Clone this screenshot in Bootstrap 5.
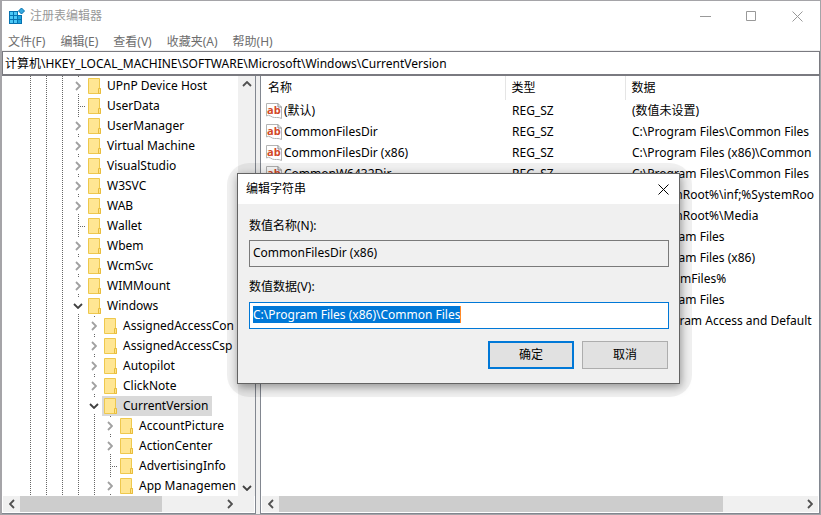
<!DOCTYPE html>
<html lang="zh-CN">
<head>
<meta charset="utf-8">
<meta name="viewport" content="width=device-width, initial-scale=1">
<title>注册表编辑器</title>
<link href="https://cdn.jsdelivr.net/npm/bootstrap@5.3.0/dist/css/bootstrap.min.css" rel="stylesheet">
<style>
body{font-family:"Noto Sans","Noto Sans CJK SC",sans-serif;font-size:12px;line-height:16px;color:#000;background:#a5a4a8;padding:1px 1px 1px 2px}
button,input{font:inherit;color:inherit}
.regwin{background:#fff}
.caption-bar{height:30px;color:#999;padding-left:6px}
.capbtn{width:46px;height:30px;background:none;border:0;padding:0;color:#999}
.menu-bar{height:19px;padding-left:6px;gap:15px}
.menu-bar a{color:#6d6d6d;text-decoration:none;padding-top:2px}
.addr{height:25px;padding:0 2px;border:1px solid #7a7a80;border-bottom-width:2px;margin-top:1px;border-radius:0;background:#fff;box-shadow:0 -1px #f0f0f0;outline:0}
.tree-pane{width:254px;border-right:1px solid #828790;border-bottom:1px solid #828790}
.splitter{width:4px;background:#f0f0f0}
.list-pane{border-left:1px solid #828790;border-right:1px solid #828790;border-bottom:1px solid #828790}
.tree{list-style:none;padding-left:20px}
.tree li{height:20px;white-space:nowrap}
.guide{width:16px;height:20px;flex:none;background:repeating-linear-gradient(#666 0 1px,transparent 1px 2px) 8px 0/1px 100% no-repeat}
.twist{width:16px;height:20px;flex:none;display:flex;align-items:center;justify-content:center;background:linear-gradient(#666,#666) 8px 0/1px 1px no-repeat,linear-gradient(#666,#666) 8px 18px/1px 1px no-repeat}
.leafline{background:repeating-linear-gradient(#666 0 1px,transparent 1px 2px) 8px 0/1px 100% no-repeat,repeating-linear-gradient(90deg,#666 0 1px,transparent 1px 2px) 8px 10px/8px 1px no-repeat}
.nodebox{height:20px;padding:0 4px 0 2px;gap:6px}
.nodebox.picked{background:#d9d9d9}
.sbar{background:#f0f0f0}
.sbar-v{width:17px}
.sbar-h{height:16px;margin:0 1px 1px}
.sarrow{width:17px;height:16px;flex:none;border:0;padding:0;background:none;display:flex;align-items:center;justify-content:center}
.sthumb{background:#cdcdcd}
.thumb-tree{flex:141}.rest-tree{flex:59}
.thumb-list{flex:445}.rest-list{flex:78}
.values{table-layout:fixed;width:100%;border-collapse:collapse}
.values th,.values td{padding:0 0 0 7px;white-space:nowrap;overflow:hidden;font-weight:400;height:21px}
.values th{height:24px}
.values th+th{border-left:1px solid #e5e5e5;padding-left:6px}
.values td:first-child{padding-left:5px}
.namecell{gap:2px}
.col-name{width:244px}.col-type{width:120px}
.edit-dialog{position:absolute;left:237px;top:173px;width:443px;border:1px solid #6a6a6a;background:#f0f0f0;box-shadow:1px 3px 9px rgba(0,0,0,.4);z-index:2}
.edit-dialog::before{content:"";position:absolute;inset:-11px -13px -14px -11px;border-radius:22px;background:rgba(0,0,0,.06);z-index:-1}
.dlg-title{height:30px;background:#fff;padding-left:8px}
.dlg-title button{width:31px;height:30px;border:0;background:none;padding:0}
.dlg-body{background:#f0f0f0;padding:14px 10px 14px 11px}
.dlg-body input{width:100%;height:27px;display:block;border:1px solid #7a7a7a;border-radius:0;padding:0 3px 2px;background:#f0f0f0;outline:0;line-height:17px;margin:6px 0 12px}
.dlg-body input.live{border-color:#0078d7;margin-top:7px;background:linear-gradient(#ff8728,#ff8728) 210px 3px/1px 17px no-repeat #fff}
.dlg-body input.live::selection{background:#0078d7;color:#fff}
.dlg-actions{padding-right:1px}
.dbtn{width:86px;height:28px;border:1px solid #adadad;background:#e1e1e1;padding:0}
.dbtn.main{border:2px solid #0078d7}
</style>
<script src="https://cdn.jsdelivr.net/npm/bootstrap@5.3.0/dist/js/bootstrap.bundle.min.js"></script>
</head>
<body class="vh-100 overflow-hidden d-flex flex-column">
<svg class="d-none">
<symbol id="fold" viewBox="0 0 13 16"><path d="M.5.5h11v10h1v5h-12z" fill="#ffe693" stroke="#eec84d"/><path d="M10.500 15.500v-5h2v5z" fill="#ffe388" stroke="#e8bd3d"/></symbol>
<symbol id="right" viewBox="0 0 6 10"><path d="M1 1l4 4-4 4" fill="none" stroke="#a0a0a0" stroke-width="1.800"/></symbol>
<symbol id="down" viewBox="0 0 10 6"><path d="M1 1l4 4 4-4" fill="none" stroke="#404040" stroke-width="1.800"/></symbol>
<symbol id="ab" viewBox="0 0 16 16"><path d="M.5.500h11.500l3.500 3.500v11.500q-2-1-3.500-1t-3.500 0-4-1.500-4 0z" fill="#fff" stroke="#b4b4b4"/><path d="M12 .5v3.500h3.500" fill="none" stroke="#888"/><text x="1" y="11" font-size="11" font-weight="700" fill="#d24726" font-family="Open Sans,sans-serif">ab</text></symbol>
</svg>
<main class="regwin flex-grow-1 d-flex flex-column">
<header class="caption-bar d-flex align-items-center">
<svg width="18" height="18" viewBox="0 0 18 18"><path d="M1 4h9v4h4v9H1z" fill="#0672b0"/><path d="M2 5h3v3H2zM6 5h3v3H6zM2 9h3v3H2zM6 9h3v3H6zM2 13h3v3H2zM6 13h3v3H6z" fill="#4cc8f6"/><path d="M10 9h3v3h-3zM10 13h3v3h-3z" fill="#1ea3dc"/><path d="M13.500 1l3 3-3 3-3-3z" fill="#36a9e0" stroke="#0672b0"/></svg>
<span class="ms-1 flex-grow-1">注册表编辑器</span>
<button class="capbtn" aria-label="最小化"><svg width="11" height="11"><path d="M0 5.500h11" stroke="#999"/></svg></button>
<button class="capbtn" aria-label="最大化"><svg width="11" height="11"><path d="M.5.500h9v9h-9z" fill="none" stroke="#999"/></svg></button>
<button class="capbtn" aria-label="关闭"><svg width="11" height="11"><path d="M.5.500l10 10M10.500.500l-10 10" stroke="#999"/></svg></button>
</header>
<nav class="menu-bar d-flex align-items-center"><a href="#">文件(F)</a><a href="#">编辑(E)</a><a href="#">查看(V)</a><a href="#">收藏夹(A)</a><a href="#">帮助(H)</a></nav>
<input class="addr w-100" aria-label="地址" value="计算机\HKEY_LOCAL_MACHINE\SOFTWARE\Microsoft\Windows\CurrentVersion">
<div class="d-flex flex-grow-1 overflow-hidden">
<section class="tree-pane d-flex flex-column flex-shrink-0">
<div class="d-flex flex-grow-1 overflow-hidden">
<ul class="tree flex-grow-1 overflow-hidden mb-0" id="tree"></ul>
<div class="sbar sbar-v d-flex flex-column justify-content-between">
<button class="sarrow" aria-label="向上"><svg width="10" height="6"><path d="M1 5l4-4 4 4" fill="none" stroke="#505050" stroke-width="1.800"/></svg></button>
<button class="sarrow" aria-label="向下"><svg width="10" height="6"><use href="#down"/></svg></button>
</div>
</div>
<div class="sbar sbar-h d-flex">
<button class="sarrow" aria-label="向左"><svg width="6" height="10"><path d="M5 1L1 5l4 4" fill="none" stroke="#505050" stroke-width="1.800"/></svg></button>
<div class="sthumb thumb-tree"></div><div class="rest-tree"></div>
<button class="sarrow me-3" aria-label="向右"><svg width="6" height="10"><path d="M1 1l4 4-4 4" fill="none" stroke="#505050" stroke-width="1.800"/></svg></button>
</div>
</section>
<div class="splitter flex-shrink-0"></div>
<section class="list-pane d-flex flex-column flex-grow-1 overflow-hidden">
<div class="flex-grow-1 overflow-hidden">
<table class="values">
<colgroup><col class="col-name"><col class="col-type"><col></colgroup>
<thead><tr><th>名称</th><th>类型</th><th>数据</th></tr></thead>
<tbody id="values"></tbody>
</table>
</div>
<div class="sbar sbar-h d-flex">
<button class="sarrow" aria-label="向左"><svg width="6" height="10"><path d="M5 1L1 5l4 4" fill="none" stroke="#505050" stroke-width="1.800"/></svg></button>
<div class="sthumb thumb-list"></div><div class="rest-list"></div>
<button class="sarrow" aria-label="向右"><svg width="6" height="10"><path d="M1 1l4 4-4 4" fill="none" stroke="#505050" stroke-width="1.800"/></svg></button>
</div>
</section>
</div>
</main>
<form class="edit-dialog" role="dialog" aria-labelledby="dlgTitle">
<div class="dlg-title d-flex align-items-center justify-content-between"><span id="dlgTitle">编辑字符串</span>
<button type="button" aria-label="关闭"><svg width="11" height="11"><path d="M.5.500l10 10M10.500.500l-10 10" stroke="#000"/></svg></button></div>
<div class="dlg-body">
<label for="vname">数值名称(N):</label>
<input id="vname" readonly value="CommonFilesDir (x86)">
<label for="vdata">数值数据(V):</label>
<input id="vdata" class="live" value="C:\Program Files (x86)\Common Files">
<div class="dlg-actions d-flex justify-content-end gap-2"><button type="button" class="dbtn main">确定</button><button type="button" class="dbtn">取消</button></div>
</div>
</form>
<script>
// kind: ">" collapsed, "v" expanded, "-" leaf
const nodes=[[3,">","UPnP Device Host"],[3,"-","UserData"],[3,">","UserManager"],[3,">","Virtual Machine"],[3,">","VisualStudio"],[3,">","W3SVC"],[3,">","WAB"],[3,"-","Wallet"],[3,">","Wbem"],[3,">","WcmSvc"],[3,">","WIMMount"],[3,"v","Windows"],[4,">","AssignedAccessCon"],[4,">","AssignedAccessCsp"],[4,">","Autopilot"],[4,">","ClickNote"],[4,"v","CurrentVersion"],[5,">","AccountPicture"],[5,">","ActionCenter"],[5,"-","AdvertisingInfo"],[5,">","App Managemen"]];
const marks={">":'<span class="twist"><svg width="6" height="10"><use href="#right"/></svg></span>',"v":'<span class="twist"><svg width="10" height="6"><use href="#down"/></svg></span>',"-":'<span class="twist leafline"></span>'};
document.getElementById("tree").innerHTML=nodes.map(([d,k,t])=>'<li class="d-flex">'+'<span class="guide"></span>'.repeat(d)+marks[k]+'<span class="nodebox d-flex align-items-center'+(t==="CurrentVersion"?" picked":"")+'"><svg width="13" height="16"><use href="#fold"/></svg><span>'+t+'</span></span></li>').join("");
const values=[["(默认)","REG_SZ","(数值未设置)"],["CommonFilesDir","REG_SZ","C:\\Program Files\\Common Files"],["CommonFilesDir (x86)","REG_SZ","C:\\Program Files (x86)\\Common"],["CommonW6432Dir","REG_SZ","C:\\Program Files\\Common Files"],["","","%SystemRoot%\\inf;%SystemRoo"],["","","%SystemRoot%\\Media"],["","","C:\\Program Files"],["","","C:\\Program Files (x86)"],["","","%ProgramFiles%"],["","","C:\\Program Files"],["","","Set Program Access and Default"]];
document.getElementById("values").innerHTML=values.map(([n,t,d])=>"<tr><td>"+(n?'<span class="namecell d-flex align-items-center"><svg class="flex-shrink-0" width="16" height="16"><use href="#ab"/></svg>'+n+"</span>":"")+"</td><td>"+t+"</td><td>"+d+"</td></tr>").join("");
const field=document.getElementById("vdata");field.focus();field.select();
</script>
</body>
</html>
